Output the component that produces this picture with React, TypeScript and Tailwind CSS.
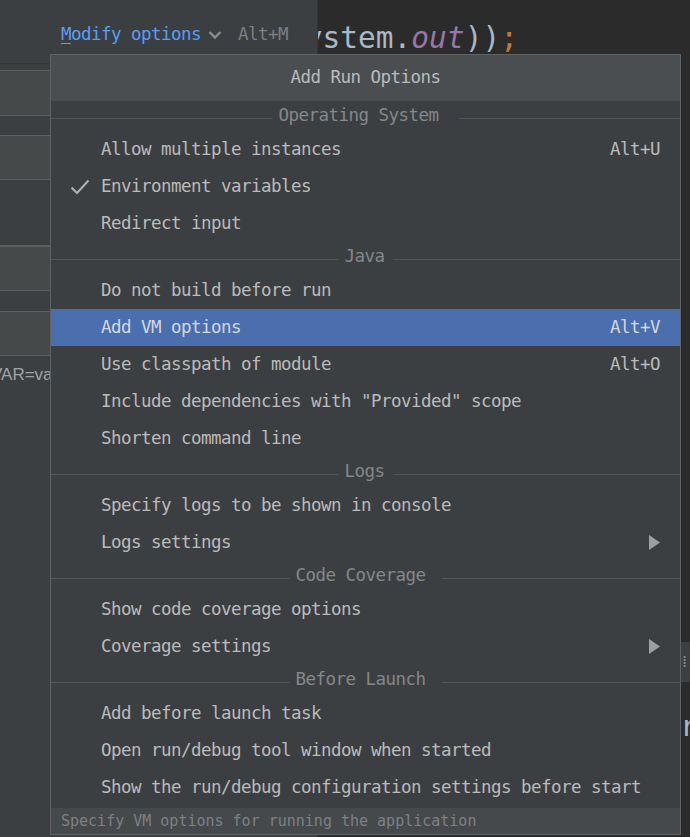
import React from "react";

type Item =
  | { kind: "header"; label: string; w: number }
  | { kind: "item"; label: string; shortcut?: string; checked?: boolean; active?: boolean; sub?: boolean };

const items: Item[] = [
  { kind: "header", label: "Operating System", w: 186 },
  { kind: "item", label: "Allow multiple instances", shortcut: "Alt+U" },
  { kind: "item", label: "Environment variables", checked: true },
  { kind: "item", label: "Redirect input" },
  { kind: "header", label: "Java", w: 54 },
  { kind: "item", label: "Do not build before run" },
  { kind: "item", label: "Add VM options", shortcut: "Alt+V", active: true },
  { kind: "item", label: "Use classpath of module", shortcut: "Alt+O" },
  { kind: "item", label: 'Include dependencies with "Provided" scope' },
  { kind: "item", label: "Shorten command line" },
  { kind: "header", label: "Logs", w: 54 },
  { kind: "item", label: "Specify logs to be shown in console" },
  { kind: "item", label: "Logs settings", sub: true },
  { kind: "header", label: "Code Coverage", w: 152 },
  { kind: "item", label: "Show code coverage options" },
  { kind: "item", label: "Coverage settings", sub: true },
  { kind: "header", label: "Before Launch", w: 152 },
  { kind: "item", label: "Add before launch task" },
  { kind: "item", label: "Open run/debug tool window when started" },
  { kind: "item", label: "Show the run/debug configuration settings before start" },
];

const mono = "font-['DejaVu_Sans_Mono',monospace] text-[17.5px] tracking-[-0.535px] leading-none";

function Field({ h }: { h: string }) {
  return <div className={`${h} w-[300px] -ml-px border border-[#5e6060] bg-[#45494a]`} />;
}

export default function App() {
  return (
    <div className="relative w-[690px] h-[837px] overflow-hidden bg-[#2b2b2b] flex">
      {/* Left settings panel */}
      <div className="w-[318px] shrink-0 h-full bg-[#3c3f41] border-r border-[#333537] flex flex-col">
        <div className={`h-[63px] flex items-center pl-[61px] pt-[6px] ${mono}`}>
          <span className="text-[#589df6]">
            <span className="underline underline-offset-[3px]">M</span>odify options
          </span>
          <svg width="14" height="10" viewBox="0 0 14 10" className="ml-[7px]">
            <polyline points="1.5,2 7,7.5 12.5,2" fill="none" stroke="#8a8d90" strokeWidth="2.4" />
          </svg>
          <span className="ml-[16px] text-[#7c7f82]">Alt+M</span>
        </div>
        <div className="h-px bg-[#343638]" />
        <div className="h-[6px]" />
        <Field h="h-[46px]" />
        <div className="h-[19px]" />
        <Field h="h-[45px]" />
        <div className="h-[66px] w-[300px] border-b border-[#5e6060]" />
        <Field h="h-[45px]" />
        <div className="h-[20px]" />
        <Field h="h-[45px]" />
        <div className="h-[9px]" />
        <div className="-ml-[9px] text-[17px] font-['Liberation_Sans',sans-serif] text-[#9ea3a8] leading-[20px] whitespace-nowrap">
          VAR=va
        </div>
      </div>

      {/* Editor */}
      <div className="flex-1 h-full overflow-hidden flex flex-col">
        <div className="-ml-[31px] mt-[18px] whitespace-nowrap font-['DejaVu_Sans_Mono',monospace] text-[29.5px] leading-[40px] text-[#a9b7c6]">
          System.<span className="italic text-[#9876aa]">out</span>))<span className="text-[#cc7832]">;</span>
        </div>
        <div className="h-[584px]" />
        <div className="ml-[362px] h-[40px] w-[24px] bg-[#3c3f41] flex items-center pl-[2px]">
          <span className="text-[#8d9093] text-[16px] leading-none font-['DejaVu_Sans',sans-serif]">⁞</span>
        </div>
        <div className="h-[28px]" />
        <div className="ml-[362px] font-['DejaVu_Sans_Mono',monospace] text-[29px] leading-[32px] text-[#a9b7c6] whitespace-nowrap">
          r
        </div>
      </div>

      {/* Popup */}
      <div className={`absolute left-[50px] top-[54px] w-[631px] h-[781px] border border-[#606366] bg-[#3c3f41] flex flex-col ${mono}`}>
        <div className="h-[46px] shrink-0 bg-[#4b4e51] flex items-center justify-center text-[#bbbbbb]">
          Add Run Options
        </div>
        <div className="flex flex-col">
          {items.map((it, i) =>
            it.kind === "header" ? (
              <div key={i} className="h-[30px] flex items-center">
                <div className="flex-1 h-px bg-[#515456] translate-y-[2px]" />
                <div className="shrink-0 pl-[6px] text-[#858789]" style={{ width: it.w }}>
                  {it.label}
                </div>
                <div className="flex-1 h-px bg-[#515456] translate-y-[2px]" />
              </div>
            ) : (
              <div
                key={i}
                className={`h-[37px] flex items-center pr-[20px] ${
                  it.active ? "bg-[#4b6eaf] text-[#d4d8de]" : "text-[#bbbbbb]"
                }`}
              >
                <div className="w-[50px] shrink-0 flex items-center pl-[19px]">
                  {it.checked && (
                    <svg width="20" height="16" viewBox="0 0 20 16">
                      <polyline points="1.5,8.5 7,14 18.5,1.5" fill="none" stroke="#afb1b3" strokeWidth="2" />
                    </svg>
                  )}
                </div>
                <div className="flex-1 whitespace-nowrap">{it.label}</div>
                {it.shortcut && <div className="shrink-0">{it.shortcut}</div>}
                {it.sub && (
                  <svg width="11" height="15" viewBox="0 0 11 15" className="shrink-0">
                    <polygon points="0,0 11,7.5 0,15" fill="#9c9ea0" />
                  </svg>
                )}
              </div>
            )
          )}
        </div>
        <div className="mt-auto h-[26px] shrink-0 bg-[#46494b] flex items-center pl-[10px] text-[15px] tracking-normal text-[#7d8083] pt-[1px]">
          Specify VM options for running the application
        </div>
      </div>
    </div>
  );
}
